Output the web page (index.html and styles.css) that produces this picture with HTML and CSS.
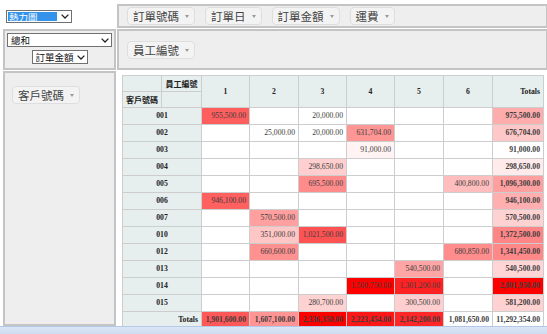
FILE: index.html
```html
<!DOCTYPE html>
<html lang="zh-Hant">
<head>
    <meta charset="UTF-8">
    <meta name="viewport" content="width=device-width, initial-scale=1.0">
    <title>樞紐分析</title>
    <link rel="stylesheet" href="styles.css">
</head>
<body>
    <div class="pvt-ui">
        <div class="renderer">
            <span class="sel sel-renderer">
                <select><option>熱力圖</option><option>表格</option><option>長條圖</option></select>
                <svg class="sel-arrow" width="8" height="5" viewBox="0 0 8 5"><path d="M0.6 0.6 L4 4 L7.4 0.6" /></svg>
            </span>
        </div>
        <div class="box unused">
            <span class="attr">訂單號碼<span class="tri"></span></span>
            <span class="attr">訂單日<span class="tri"></span></span>
            <span class="attr">訂單金額<span class="tri"></span></span>
            <span class="attr">運費<span class="tri"></span></span>
        </div>

        <div class="box vals">
            <span class="sel sel-agg">
                <select><option>總和</option><option>計數</option><option>平均</option></select>
                <svg class="sel-arrow" width="8" height="5" viewBox="0 0 8 5"><path d="M0.6 0.6 L4 4 L7.4 0.6" /></svg>
            </span>
            <span class="sel sel-field">
                <select><option>訂單金額</option><option>運費</option></select>
                <svg class="sel-arrow" width="8" height="5" viewBox="0 0 8 5"><path d="M0.6 0.6 L4 4 L7.4 0.6" /></svg>
            </span>
        </div>
        <div class="box cols">
            <span class="attr">員工編號<span class="tri"></span></span>
        </div>

        <div class="box rows">
            <span class="attr">客戶號碼<span class="tri"></span></span>
        </div>
        <div class="output">
            <table class="pvt-table">
                <colgroup>
                    <col style="width: 39px"><col style="width: 40px">
                    <col style="width: 48px"><col style="width: 49px"><col style="width: 48px">
                    <col style="width: 48px"><col style="width: 49px"><col style="width: 49px">
                    <col style="width: 51px">
                </colgroup>
                <thead>
                    <tr>
                        <th></th>
                        <th class="axis">員工編號</th>
                        <th rowspan="2">1</th>
                        <th rowspan="2">2</th>
                        <th rowspan="2">3</th>
                        <th rowspan="2">4</th>
                        <th rowspan="2">5</th>
                        <th rowspan="2">6</th>
                        <th rowspan="2" class="total-label">Totals</th>
                    </tr>
                    <tr>
                        <th class="axis">客戶號碼</th>
                        <th></th>
                    </tr>
                </thead>
                <tbody>
                    <tr>
                        <th colspan="2">001</th>
                        <td style="background-color: rgb(255,94,94)">955,500.00</td>
                        <td></td>
                        <td>20,000.00</td>
                        <td></td><td></td><td></td>
                        <td class="total" style="background-color: rgb(255,172,172)">975,500.00</td>
                    </tr>
                    <tr>
                        <th colspan="2">002</th>
                        <td></td>
                        <td style="background-color: rgb(255,254,254)">25,000.00</td>
                        <td>20,000.00</td>
                        <td style="background-color: rgb(255,150,150)">631,704.00</td>
                        <td></td><td></td>
                        <td class="total" style="background-color: rgb(255,200,200)">676,704.00</td>
                    </tr>
                    <tr>
                        <th colspan="2">003</th>
                        <td></td><td></td><td></td>
                        <td style="background-color: rgb(255,243,243)">91,000.00</td>
                        <td></td><td></td>
                        <td class="total">91,000.00</td>
                    </tr>
                    <tr>
                        <th colspan="2">004</th>
                        <td></td><td></td>
                        <td style="background-color: rgb(255,207,207)">298,650.00</td>
                        <td></td><td></td><td></td>
                        <td class="total" style="background-color: rgb(255,235,235)">298,650.00</td>
                    </tr>
                    <tr>
                        <th colspan="2">005</th>
                        <td></td><td></td>
                        <td style="background-color: rgb(255,139,139)">695,500.00</td>
                        <td></td><td></td>
                        <td style="background-color: rgb(255,189,189)">400,800.00</td>
                        <td class="total" style="background-color: rgb(255,160,160)">1,096,300.00</td>
                    </tr>
                    <tr>
                        <th colspan="2">006</th>
                        <td style="background-color: rgb(255,96,96)">946,100.00</td>
                        <td></td><td></td><td></td><td></td><td></td>
                        <td class="total" style="background-color: rgb(255,175,175)">946,100.00</td>
                    </tr>
                    <tr>
                        <th colspan="2">007</th>
                        <td></td>
                        <td style="background-color: rgb(255,160,160)">570,500.00</td>
                        <td></td><td></td><td></td><td></td>
                        <td class="total" style="background-color: rgb(255,210,210)">570,500.00</td>
                    </tr>
                    <tr>
                        <th colspan="2">010</th>
                        <td></td>
                        <td style="background-color: rgb(255,198,198)">351,000.00</td>
                        <td style="background-color: rgb(255,83,83)">1,021,500.00</td>
                        <td></td><td></td><td></td>
                        <td class="total" style="background-color: rgb(255,134,134)">1,372,500.00</td>
                    </tr>
                    <tr>
                        <th colspan="2">012</th>
                        <td></td>
                        <td style="background-color: rgb(255,145,145)">660,600.00</td>
                        <td></td><td></td><td></td>
                        <td style="background-color: rgb(255,141,141)">680,850.00</td>
                        <td class="total" style="background-color: rgb(255,137,137)">1,341,450.00</td>
                    </tr>
                    <tr>
                        <th colspan="2">013</th>
                        <td></td><td></td><td></td><td></td>
                        <td style="background-color: rgb(255,165,165)">540,500.00</td>
                        <td></td>
                        <td class="total" style="background-color: rgb(255,213,213)">540,500.00</td>
                    </tr>
                    <tr>
                        <th colspan="2">014</th>
                        <td></td><td></td><td></td>
                        <td style="background-color: rgb(255,0,0)">1,500,750.00</td>
                        <td style="background-color: rgb(255,34,34)">1,301,200.00</td>
                        <td></td>
                        <td class="total" style="background-color: rgb(255,0,0)">2,801,950.00</td>
                    </tr>
                    <tr>
                        <th colspan="2">015</th>
                        <td></td><td></td>
                        <td style="background-color: rgb(255,210,210)">280,700.00</td>
                        <td></td>
                        <td style="background-color: rgb(255,207,207)">300,500.00</td>
                        <td></td>
                        <td class="total" style="background-color: rgb(255,209,209)">581,200.00</td>
                    </tr>
                    <tr>
                        <th colspan="2" class="total-label">Totals</th>
                        <td class="total" style="background-color: rgb(255,88,88)">1,901,600.00</td>
                        <td class="total" style="background-color: rgb(255,148,148)">1,607,100.00</td>
                        <td class="total" style="background-color: rgb(255,0,0)">2,336,350.00</td>
                        <td class="total" style="background-color: rgb(255,23,23)">2,223,454.00</td>
                        <td class="total" style="background-color: rgb(255,39,39)">2,142,200.00</td>
                        <td class="total">1,081,650.00</td>
                        <td class="total">11,292,354.00</td>
                    </tr>
                </tbody>
            </table>
        </div>
    </div>
    <div class="frame-bottom"></div>
</body>
</html>
```

FILE: styles.css
```css
body {
    margin: 0;
    width: 547px;
    height: 334px;
    overflow: hidden;
    display: flex;
    flex-direction: column;
    background: #fff;
    font-family: "Noto Sans CJK TC", sans-serif;
    color: #333;
}
.pvt-ui {
    flex: 1;
    min-height: 0;
    display: grid;
    grid-template-columns: 113px 431px;
    grid-template-rows: 24px 41px 1fr;
    gap: 1px 1px;
    padding: 4px 0 0 3px;
    overflow: hidden;
}
.box {
    border: 2px solid #c4c4c4;
    background: #eee;
    box-sizing: border-box;
}
.renderer {
    display: flex;
    align-items: center;
    padding-left: 3px;
}
.unused, .cols {
    display: flex;
    align-items: center;
    gap: 10px;
    padding-left: 8px;
}
.vals {
    display: flex;
    flex-direction: column;
    align-items: center;
    gap: 3px;
    padding-top: 2px;
}
.rows {
    padding: 8px 0 0 7px;
}
.output {
    padding: 4px 0 0 5px;
    overflow: hidden;
}

/* attribute pills */
.attr {
    display: inline-flex;
    align-items: center;
    height: 18px;
    box-sizing: border-box;
    padding: 0 5px;
    background: #f3f3f3;
    border: 1px solid #dedede;
    border-radius: 4px;
    font-size: 11.5px;
    color: #444;
    white-space: nowrap;
}
.tri {
    margin: 1px 0 0 6px;
    width: 0;
    height: 0;
    border-left: 2px solid transparent;
    border-right: 2px solid transparent;
    border-top: 3px solid #9a9a9a;
}

/* selects */
.sel {
    position: relative;
    display: inline-block;
    line-height: 0;
}
.sel select {
    appearance: none;
    -webkit-appearance: none;
    margin: 0;
    height: 14px;
    padding: 0 11px 0 3px;
    border: 1px solid #707070;
    border-radius: 0;
    background: #fff;
    font-family: "Noto Sans CJK TC", sans-serif;
    font-size: 9.5px;
    line-height: 12px;
    color: #111;
    box-sizing: border-box;
}
.sel-arrow {
    position: absolute;
    right: 3px;
    top: 5px;
    pointer-events: none;
}
.sel-arrow path {
    fill: none;
    stroke: #222;
    stroke-width: 1.3;
}
.sel-renderer select {
    width: 66px;
    height: 13px;
    padding-left: 2px;
    color: #fff;
    background: linear-gradient(#3392ea, #3392ea) no-repeat 1px 1px / calc(100% - 15px) calc(100% - 2px), #fff;
}
.sel-renderer .sel-arrow {
    top: 4px;
}
.sel-agg select {
    width: 105px;
}
.sel-field select {
    width: 56px;
    padding-left: 3px;
}

/* pivot table */
.pvt-table {
    border-collapse: collapse;
    table-layout: fixed;
    width: 421px;
    font-family: "Liberation Serif", "Noto Sans CJK TC", serif;
    font-size: 7.7px;
}
.pvt-table th, .pvt-table td {
    border: 1px solid #cdcdcd;
    padding: 3px 3px;
    line-height: 10px;
    white-space: nowrap;
}
.pvt-table th {
    background: #e6eeee;
    color: #222;
    font-weight: bold;
}
.pvt-table thead th {
    line-height: 9px;
}
.pvt-table .axis {
    font-family: "Noto Sans CJK TC", serif;
    font-size: 8px;
}
.pvt-table td {
    background: #fff;
    color: #3d3d3d;
    text-align: right;
    vertical-align: top;
}
.pvt-table .total-label {
    text-align: right;
}
.pvt-table td.total {
    font-weight: bold;
}

.frame-bottom {
    flex: none;
    height: 8px;
    box-sizing: border-box;
    border-top: 1px solid #b3c8e6;
    background: linear-gradient(#dbe7f7, #cddcf1);
}
```
